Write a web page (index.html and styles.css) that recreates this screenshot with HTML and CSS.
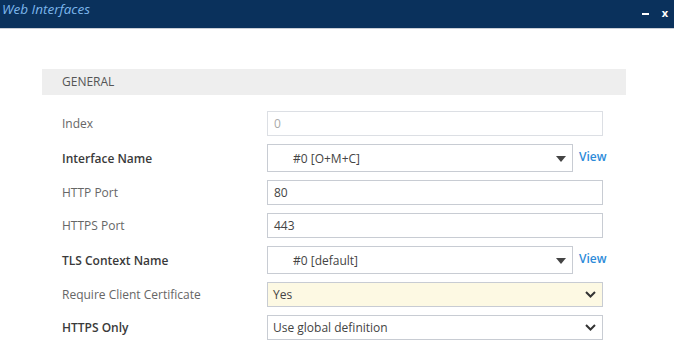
FILE: index.html
```html
<!DOCTYPE html>
<html>
<head>
<meta charset="utf-8">
<link rel="stylesheet" href="styles.css">
</head>
<body>
<div class="titlebar">
  <span class="title">Web Interfaces</span>
  <div class="win-btns"><span class="min"></span><span class="close">x</span></div>
</div>
<div class="content">
  <div class="section">GENERAL</div>
  <div class="form">
    <div class="label">Index</div>
    <div class="ctrl"><div class="input disabled">0</div></div>

    <div class="label strong">Interface Name</div>
    <div class="ctrl"><div class="combo"><span>#0 [O+M+C]</span><svg class="tri" width="10" height="6" viewBox="0 0 10 6"><path d="M0 0H10L5 6Z" fill="#444"/></svg></div><a class="view">View</a></div>

    <div class="label">HTTP Port</div>
    <div class="ctrl"><div class="input">80</div></div>

    <div class="label">HTTPS Port</div>
    <div class="ctrl"><div class="input">443</div></div>

    <div class="label strong">TLS Context Name</div>
    <div class="ctrl"><div class="combo"><span>#0 [default]</span><svg class="tri" width="10" height="6" viewBox="0 0 10 6"><path d="M0 0H10L5 6Z" fill="#444"/></svg></div><a class="view">View</a></div>

    <div class="label">Require Client Certificate</div>
    <div class="ctrl"><div class="select changed"><span>Yes</span><svg class="chev" width="11" height="7" viewBox="0 0 11 7"><path d="M1 1L5.5 5.5L10 1" fill="none" stroke="#333" stroke-width="2"/></svg></div></div>

    <div class="label strong">HTTPS Only</div>
    <div class="ctrl"><div class="select"><span>Use global definition</span><svg class="chev" width="11" height="7" viewBox="0 0 11 7"><path d="M1 1L5.5 5.5L10 1" fill="none" stroke="#333" stroke-width="2"/></svg></div></div>
  </div>
</div>
</body>
</html>
```
FILE: styles.css
```css
* { box-sizing: border-box; }
body {
  margin: 0;
  font-family: "Open Sans", "DejaVu Sans", sans-serif;
  font-size: 12px;
  color: #444;
  background: #fff;
}
.titlebar {
  height: 29px;
  background: #0a315c;
  border-bottom: 1px solid #c9ced6;
  display: flex;
  align-items: flex-start;
  justify-content: space-between;
}
.title {
  font-style: italic;
  font-size: 13.5px;
  color: #7cb6ec;
  margin-left: 2px;
  line-height: 18px;
}
.win-btns {
  display: flex;
  align-items: center;
  margin-top: 6px;
  margin-right: 6px;
  gap: 13px;
  height: 14px;
}
.min {
  display: block;
  width: 7px;
  height: 2px;
  background: #fff;
  margin-top: 2px;
}
.close {
  color: #fff;
  font-weight: 700;
  font-size: 11px;
  line-height: 14px;
}
.content {
  padding: 40px 48px 0 42px;
}
.section {
  height: 26px;
  background: #eeeeee;
  color: #555;
  padding-left: 20px;
  line-height: 26px;
  font-size: 12px;
}
.form {
  margin-top: 16px;
  padding-left: 20px;
  display: grid;
  grid-template-columns: 205px 336px;
  row-gap: 8px;
  align-items: center;
}
.label {
  color: #666;
}
.label.strong {
  color: #3a3a3a;
  font-weight: 600;
}
.ctrl {
  display: flex;
  align-items: center;
}
.input, .select {
  width: 336px;
  height: 25px;
  border: 1px solid #c8ccd3;
  background: #fff;
  color: #444;
  padding-left: 6px;
  display: flex;
  align-items: center;
}
.input.disabled {
  border-color: #dcdfe4;
  color: #aaa;
}
.select {
  padding-left: 5px;
  justify-content: space-between;
  padding-right: 6px;
}
.select.changed {
  background: #fdf9e3;
}
.combo {
  flex-shrink: 0;
  width: 306px;
  height: 28px;
  border: 1px solid #c8ccd3;
  display: flex;
  align-items: center;
  justify-content: space-between;
  padding-left: 25px;
  padding-right: 6px;
  color: #444;
}
.tri { margin-top: 1px; }
.view {
  flex-shrink: 0;
  margin-left: 6px;
  color: #2d8bd9;
  font-weight: 600;
  margin-top: -4px;
}
```
